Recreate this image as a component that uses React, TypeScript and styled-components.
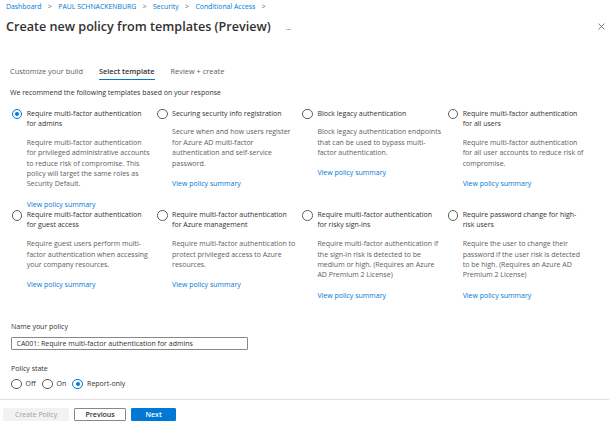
import React from "react";
import styled, { createGlobalStyle } from "styled-components";

const GlobalStyle = createGlobalStyle`
  html, body {
    margin: 0;
    padding: 0;
    background: #ffffff;
  }
  body {
    font-family: "Open Sans", "Noto Sans", sans-serif;
    color: #323130;
    -webkit-font-smoothing: antialiased;
  }
`;

const Page = styled.div`
  width: 609px;
  height: 432px;
  display: flex;
  flex-direction: column;
  overflow: hidden;
`;

const Header = styled.header`
  padding: 2px 3px 0 6px;
`;

const Breadcrumb = styled.nav`
  display: flex;
  align-items: center;
  gap: 6.4px;
  font-size: 6.9px;
  line-height: 10px;
  color: #0078d4;
`;

const Crumb = styled.span`
  white-space: nowrap;
`;

const Chevron = styled.span`
  color: #605e5c;
`;

const TitleRow = styled.div`
  display: flex;
  align-items: center;
  height: 20px;
  margin-top: 4px;
`;

const Title = styled.h1`
  margin: 0;
  font-size: 12.6px;
  font-weight: 600;
  color: #323130;
  white-space: nowrap;
`;

const More = styled.span`
  margin-left: 15px;
  font-size: 8px;
  color: #605e5c;
  letter-spacing: -0.5px;
`;

const CloseButton = styled.button`
  margin-left: auto;
  border: 0;
  background: none;
  padding: 0;
  width: 10px;
  height: 10px;
  display: flex;
  align-items: center;
  justify-content: center;
`;

const Body = styled.main`
  flex: 1;
  padding: 0 0 0 10px;
`;

const Tabs = styled.div`
  display: flex;
  gap: 16px;
  margin-top: 30px;
`;

const Tab = styled.div<{ $active?: boolean }>`
  font-size: 7.4px;
  line-height: 10px;
  padding-bottom: 2.5px;
  color: ${(p) => (p.$active ? "#323130" : "#605e5c")};
  font-weight: ${(p) => (p.$active ? 600 : 400)};
  border-bottom: 1.4px solid ${(p) => (p.$active ? "#0078d4" : "transparent")};
  white-space: nowrap;
`;

const Intro = styled.p`
  margin: 8.4px 0 0;
  font-size: 7px;
  line-height: 10px;
  color: #323130;
`;

const Grid = styled.div`
  display: grid;
  grid-template-columns: repeat(4, 145.3px);
  margin-top: 10.8px;
  padding-left: 1.7px;
`;

const Option = styled.label`
  display: flex;
  align-items: flex-start;
  gap: 4.5px;
`;

const Radio = styled.span<{ $checked?: boolean }>`
  flex: 0 0 auto;
  box-sizing: border-box;
  width: 10.6px;
  height: 10.6px;
  border-radius: 50%;
  border: 1px solid ${(p) => (p.$checked ? "#0078d4" : "#605e5c")};
  display: flex;
  align-items: center;
  justify-content: center;
  &::after {
    content: "";
    width: 4.4px;
    height: 4.4px;
    border-radius: 50%;
    background: ${(p) => (p.$checked ? "#0078d4" : "transparent")};
  }
`;

const OptionBody = styled.div`
  width: 125px;
  font-size: 7px;
  line-height: 10.4px;
`;

const OptionTitle = styled.div`
  color: #323130;
`;

const OptionDesc = styled.div`
  margin-top: 8.3px;
  color: #605e5c;
`;

const SummaryLink = styled.a`
  display: block;
  margin-top: 9.8px;
  color: #0078d4;
  text-decoration: none;
`;

const Field = styled.div`
  margin-top: 20.6px;
  padding-left: 1px;
`;

const FieldLabel = styled.div`
  font-size: 7px;
  line-height: 10.4px;
  color: #323130;
`;

const TextInput = styled.input`
  display: block;
  box-sizing: border-box;
  margin-top: 5.5px;
  width: 237px;
  height: 12.7px;
  padding: 0 4.5px;
  border: 1px solid #8a8886;
  border-radius: 1px;
  font-family: inherit;
  font-size: 7px;
  color: #323130;
  outline: none;
`;

const StateField = styled.div`
  margin-top: 13.8px;
  padding-left: 1px;
`;

const StateRow = styled.div`
  display: flex;
  align-items: center;
  gap: 6.2px;
  margin-top: 4.3px;
`;

const StateOption = styled.label`
  display: flex;
  align-items: center;
  gap: 4px;
  font-size: 7px;
  line-height: 10.6px;
  color: #323130;
`;

const Footer = styled.footer`
  border-top: 1px solid #e1dfdd;
  height: 24.5px;
  padding: 8px 0 0 3.3px;
  display: flex;
  gap: 5.3px;
  align-items: flex-start;
`;

const Button = styled.button<{ $variant: "disabled" | "default" | "primary" }>`
  box-sizing: border-box;
  height: 13.4px;
  padding: 0;
  font-family: inherit;
  font-size: 7px;
  border-radius: 1px;
  border: 1px solid
    ${(p) =>
      p.$variant === "primary"
        ? "#0078d4"
        : p.$variant === "default"
        ? "#8a8886"
        : "#f3f2f1"};
  background: ${(p) =>
    p.$variant === "primary"
      ? "#0078d4"
      : p.$variant === "default"
      ? "#ffffff"
      : "#f3f2f1"};
  color: ${(p) =>
    p.$variant === "primary"
      ? "#ffffff"
      : p.$variant === "default"
      ? "#323130"
      : "#a19f9d"};
  font-weight: ${(p) => (p.$variant === "disabled" ? 400 : 600)};
`;

type Template = {
  title: string;
  description: string;
};

const templates: Template[] = [
  {
    title: "Require multi-factor authentication for admins",
    description:
      "Require multi-factor authentication for privileged administrative accounts to reduce risk of compromise. This policy will target the same roles as Security Default.",
  },
  {
    title: "Securing security info registration",
    description:
      "Secure when and how users register for Azure AD multi-factor authentication and self-service password.",
  },
  {
    title: "Block legacy authentication",
    description:
      "Block legacy authentication endpoints that can be used to bypass multi-factor authentication.",
  },
  {
    title: "Require multi-factor authentication for all users",
    description:
      "Require multi-factor authentication for all user accounts to reduce risk of compromise.",
  },
  {
    title: "Require multi-factor authentication for guest access",
    description:
      "Require guest users perform multi-factor authentication when accessing your company resources.",
  },
  {
    title: "Require multi-factor authentication for Azure management",
    description:
      "Require multi-factor authentication to protect privileged access to Azure resources.",
  },
  {
    title: "Require multi-factor authentication for risky sign-ins",
    description:
      "Require multi-factor authentication if the sign-in risk is detected to be medium or high. (Requires an Azure AD Premium 2 License)",
  },
  {
    title: "Require password change for high-risk users",
    description:
      "Require the user to change their password if the user risk is detected to be high. (Requires an Azure AD Premium 2 License)",
  },
];

const crumbs = [
  "Dashboard",
  "PAUL SCHNACKENBURG",
  "Security",
  "Conditional Access",
];

function CloseIcon() {
  return (
    <svg width="7" height="7" viewBox="0 0 7 7">
      <path d="M0.5 0.5 L6.5 6.5 M6.5 0.5 L0.5 6.5" stroke="#605e5c" strokeWidth="0.8" fill="none" />
    </svg>
  );
}

export default function App() {
  const selected = 0;
  const policyState = "report";

  return (
    <Page>
      <GlobalStyle />
      <Header>
        <Breadcrumb>
          {crumbs.map((c) => (
            <React.Fragment key={c}>
              <Crumb>{c}</Crumb>
              <Chevron>&gt;</Chevron>
            </React.Fragment>
          ))}
        </Breadcrumb>
        <TitleRow>
          <Title>Create new policy from templates (Preview)</Title>
          <More>...</More>
          <CloseButton aria-label="Close">
            <CloseIcon />
          </CloseButton>
        </TitleRow>
      </Header>

      <Body>
        <Tabs>
          <Tab>Customize your build</Tab>
          <Tab $active>Select template</Tab>
          <Tab>Review + create</Tab>
        </Tabs>
        <Intro>We recommend the following templates based on your response</Intro>

        <Grid>
          {templates.map((t, i) => (
            <Option key={t.title}>
              <Radio $checked={i === selected} />
              <OptionBody>
                <OptionTitle>{t.title}</OptionTitle>
                <OptionDesc>{t.description}</OptionDesc>
                <SummaryLink href="#">View policy summary</SummaryLink>
              </OptionBody>
            </Option>
          ))}
        </Grid>

        <Field>
          <FieldLabel>Name your policy</FieldLabel>
          <TextInput defaultValue="CA001: Require multi-factor authentication for admins" />
        </Field>

        <StateField>
          <FieldLabel>Policy state</FieldLabel>
          <StateRow>
            <StateOption>
              <Radio $checked={policyState === "off"} />
              Off
            </StateOption>
            <StateOption>
              <Radio $checked={policyState === "on"} />
              On
            </StateOption>
            <StateOption>
              <Radio $checked={policyState === "report"} />
              Report-only
            </StateOption>
          </StateRow>
        </StateField>
      </Body>

      <Footer>
        <Button $variant="disabled" style={{ width: 65.7 }}>Create Policy</Button>
        <Button $variant="default" style={{ width: 51.7 }}>Previous</Button>
        <Button $variant="primary" style={{ width: 44.7 }}>Next</Button>
      </Footer>
    </Page>
  );
}
